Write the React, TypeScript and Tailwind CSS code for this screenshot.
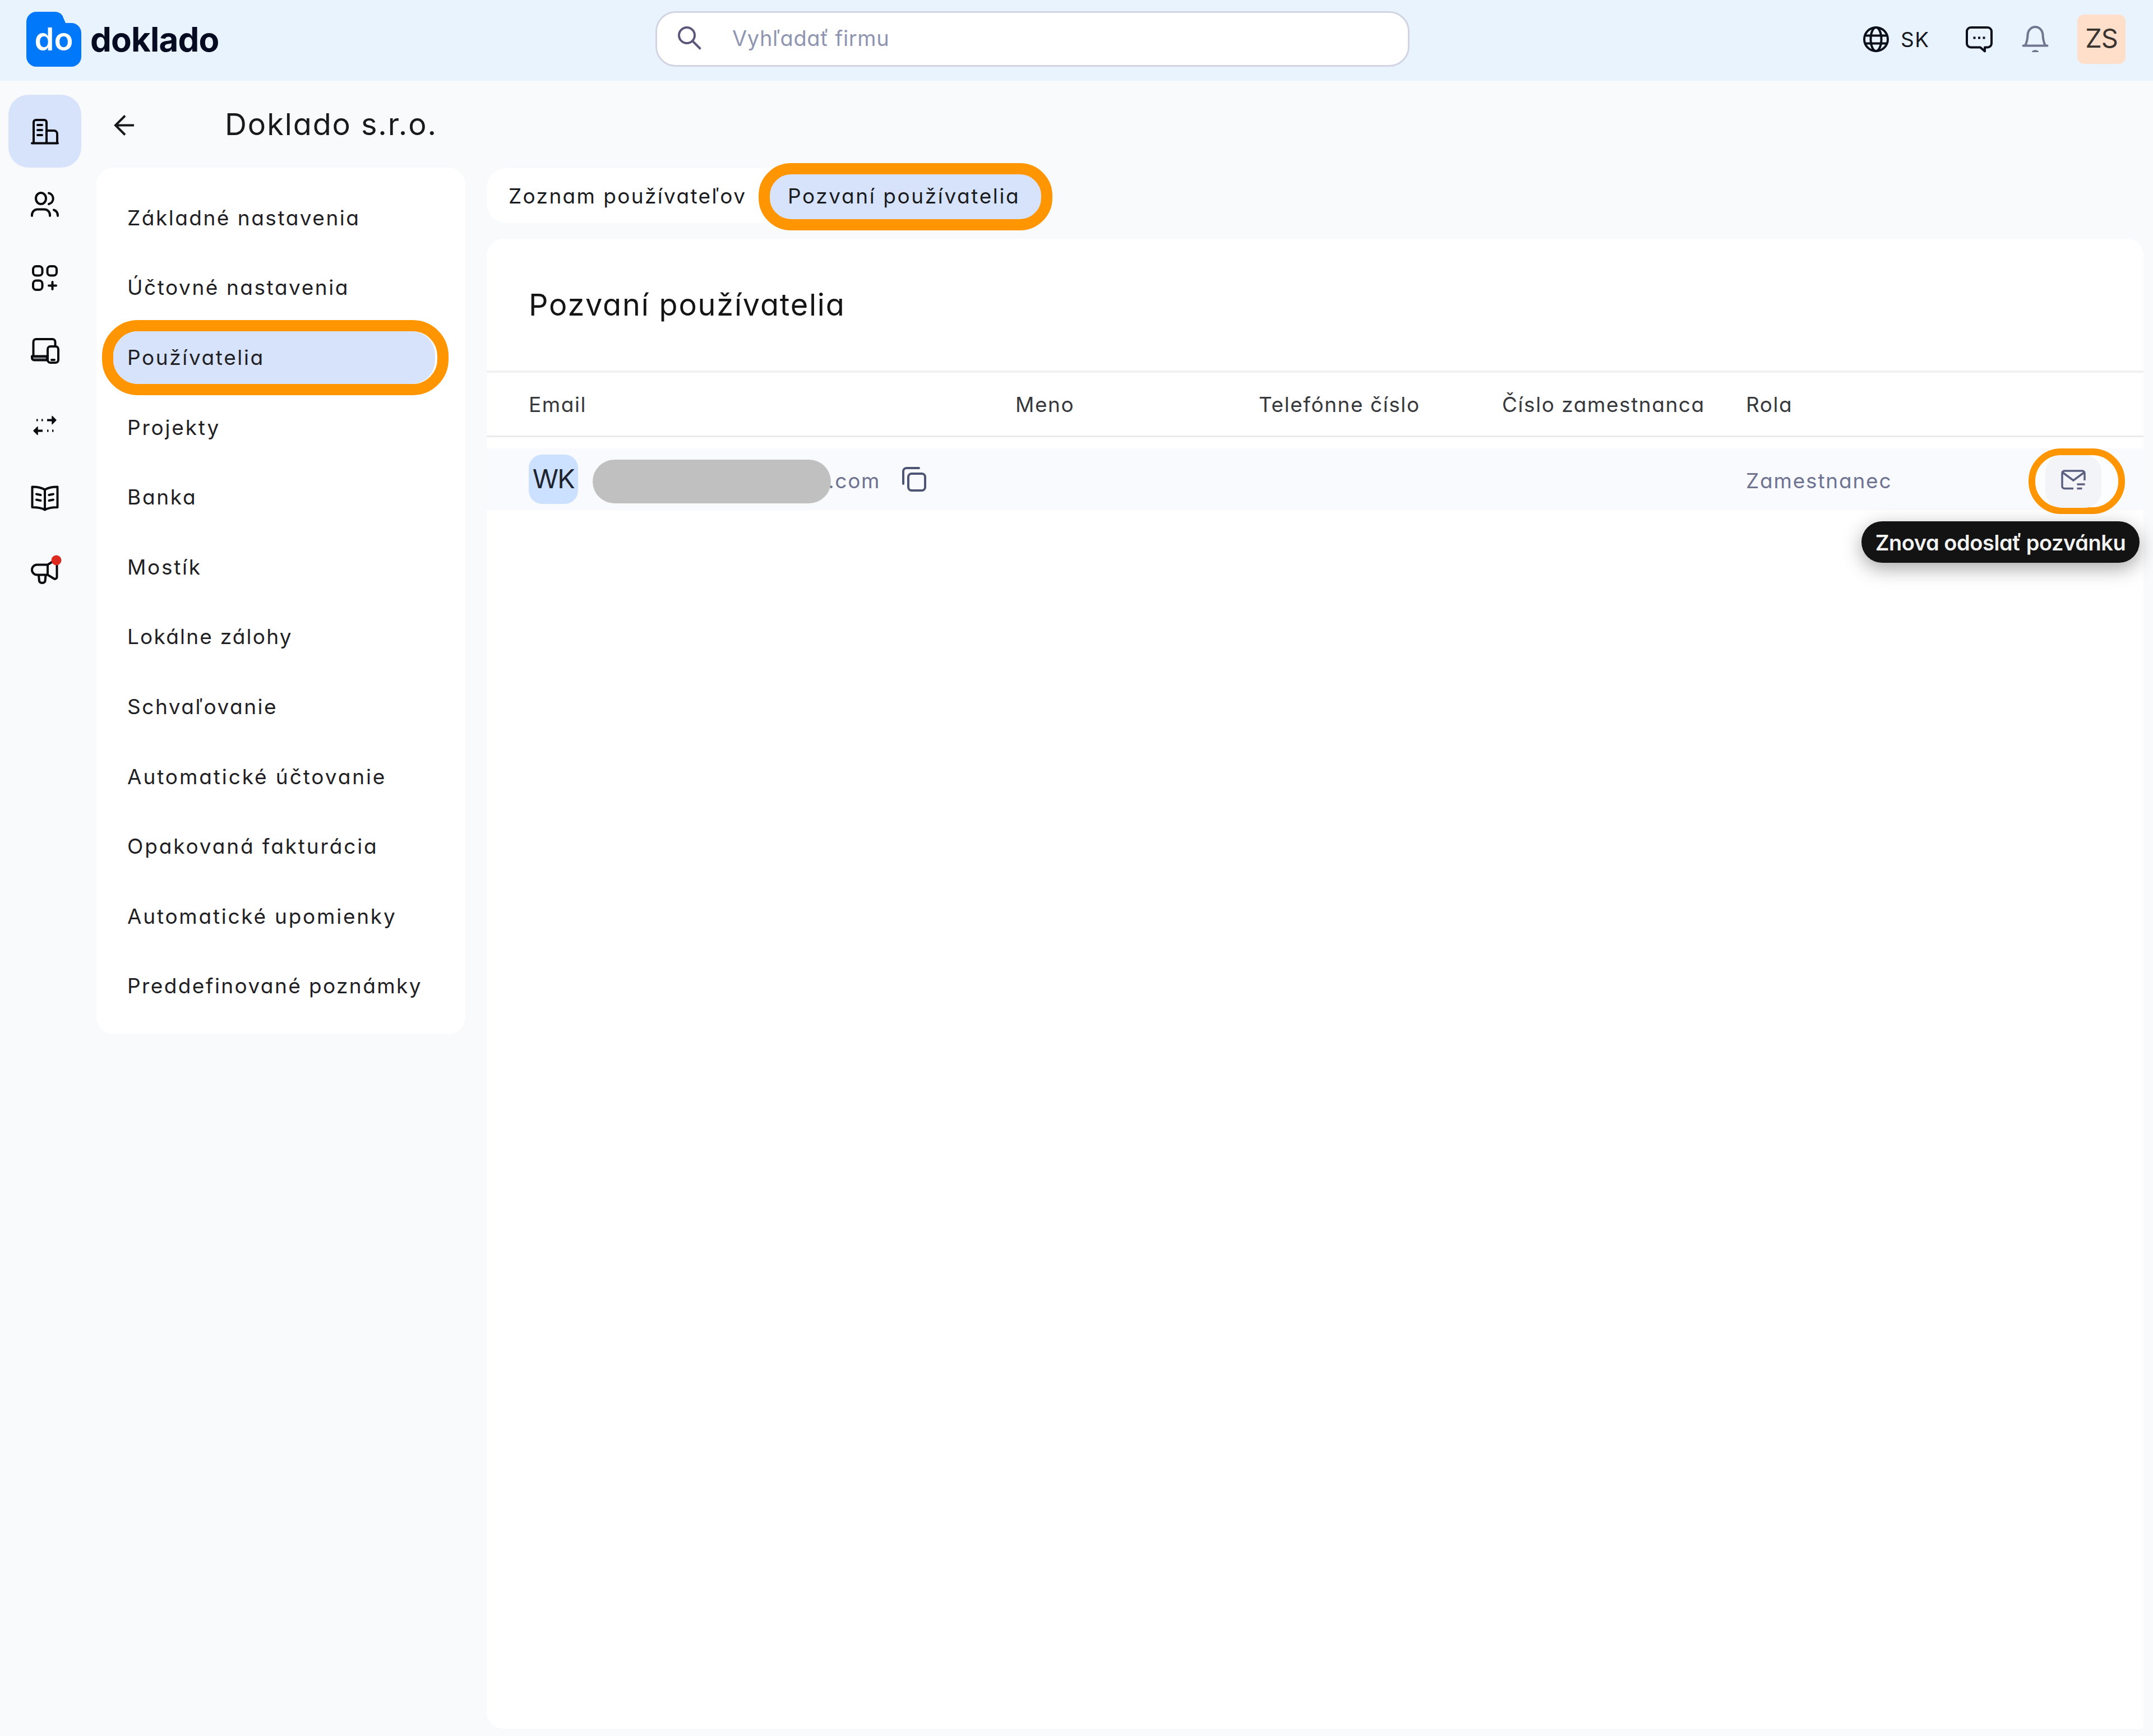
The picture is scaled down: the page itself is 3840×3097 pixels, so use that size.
import { ReactNode } from "react";

const menu = [
  { label: "Základné nastavenia", tracking: "tracking-[2.5px]" },
  { label: "Účtovné nastavenia", tracking: "tracking-[2.55px]" },
  { label: "Používatelia", tracking: "tracking-[2.6px]", active: true },
  { label: "Projekty", tracking: "tracking-[2.8px]" },
  { label: "Banka", tracking: "tracking-[2.7px]" },
  { label: "Mostík", tracking: "tracking-[2.7px]" },
  { label: "Lokálne zálohy", tracking: "tracking-[2.2px]" },
  { label: "Schvaľovanie", tracking: "tracking-[2.5px]" },
  { label: "Automatické účtovanie", tracking: "tracking-[2.9px]" },
  { label: "Opakovaná fakturácia", tracking: "tracking-[2.85px]" },
  { label: "Automatické upomienky", tracking: "tracking-[2.75px]" },
  { label: "Preddefinované poznámky", tracking: "tracking-[2.4px]" },
];

const columns = ["Email", "Meno", "Telefónne číslo", "Číslo zamestnanca", "Rola"];

function RailIcon({ children }: { children: ReactNode }) {
  return (
    <svg
      width="60"
      height="60"
      viewBox="0 0 60 60"
      fill="none"
      stroke="#0b0b0f"
      strokeWidth="4"
      strokeLinecap="round"
      strokeLinejoin="round"
      className="overflow-visible"
    >
      {children}
    </svg>
  );
}

const rail = [
  <RailIcon key="company">
    <path d="M10 51V14a4 4 0 0 1 4-4h15a4 4 0 0 1 4 4v37M33 29h13a6 6 0 0 1 6 6v16M7 51.500h46" />
    <path d="M17 19h8M17 28h8M17 37h8" />
  </RailIcon>,
  <RailIcon key="users">
    <ellipse cx="23" cy="19" rx="9" ry="10" />
    <path d="M37 9.500a10 10 0 0 1 0 19.500M7 50v-2a10 10 0 0 1 10-9.500h12a10 10 0 0 1 10 9.500v2M46 39.500c4.500 1.500 7 5 7 10.500" />
  </RailIcon>,
  <RailIcon key="modules">
    <rect x="9" y="9" width="16.500" height="16.500" rx="5.500" />
    <rect x="34.500" y="9" width="16.500" height="16.500" rx="5.500" />
    <rect x="9" y="34.500" width="16.500" height="16.500" rx="5.500" />
    <path d="M43.500 37v13M37 43.500h13" />
  </RailIcon>,
  <RailIcon key="devices">
    <path d="M9.500 38V13a5 5 0 0 1 5-5h29a5 5 0 0 1 5 5v6" />
    <path d="M34 38.500H7v3a4 4 0 0 0 4 4h23z" fill="#8b8c90" />
    <rect x="35" y="21" width="19" height="29" rx="5" />
    <path d="M42 45h5" />
  </RailIcon>,
  <RailIcon key="transfers">
    <path d="M34 21.500h12M14 40.500h12" strokeLinecap="butt" />
    <path d="M15 21.500h2.500M24 21.500h2.500M34 40.500h2.500M43 40.500h2.500" strokeLinecap="butt" />
    <path d="M43 14.500l7 7-7 7zM17 33.500l-7 7 7 7z" fill="#0b0b0f" strokeWidth="1.500" />
  </RailIcon>,
  <RailIcon key="ledger">
    <path d="M7.500 9.500c8 0 16 1 22.500 5 6.500-4 14.500-5 22.500-5v36.500c-8 0-16 .5-22.500 4.500-6.500-4-14.500-4.500-22.500-4.500zM30 14.500v36" />
    <path d="M15 22.500l7.500 1.500M15 32.500l7.500 1.500M45 22.500l-7.500 1.500M45 32.500l-7.500 1.500" />
  </RailIcon>,
  <RailIcon key="news">
    <path d="M35 17.500H16a9 9 0 0 0 0 18h19zM35 17.500L51.500 7v32a3.500 3.500 0 0 1-5 3.500L35 35.500" />
    <path d="M19 36l1 11a6 6 0 0 0 10.500 0l1-11" />
    <circle cx="50.500" cy="9.500" r="9" fill="#dc2a20" stroke="none" />
  </RailIcon>,
];

function Header() {
  return (
    <header className="flex h-[144px] items-center bg-[#e9f3fe] pr-[49px] pb-[5px] pl-[47px]">
      <div className="flex w-[1122px] items-center [font-feature-settings:normal]">
        <div className="relative flex h-[98px] w-[98px] items-center justify-center">
          <svg className="absolute inset-0" width="98" height="98" viewBox="0 0 98 98">
            <path
              fill="#0078fa"
              d="M18 0H50c9 0 14 4 16 11l4 9h10a18 18 0 0 1 18 18V80a18 18 0 0 1-18 18H18A18 18 0 0 1 0 80V18A18 18 0 0 1 18 0z"
            />
          </svg>
          <span className="relative text-[56px] leading-none font-semibold text-white">do</span>
        </div>
        <span className="ml-[16px] text-[60px] leading-none font-bold tracking-[-0.8px] text-[#060b22]">
          doklado
        </span>
      </div>

      <div className="flex h-[99px] w-[1345px] items-center rounded-[36px] border-[3px] border-[#d2d4e2] bg-white pb-[4px] pl-[36px]">
        <svg width="44" height="44" viewBox="0 0 44 44" fill="none" stroke="#5d587b" strokeWidth="4">
          <circle cx="17" cy="17" r="14" />
          <path d="M27 27l14.500 14.500" />
        </svg>
        <span className="ml-[54px] text-[38px] tracking-[0.6px] text-[#8f95b0]">Vyhľadať firmu</span>
      </div>

      <div className="ml-auto flex items-center">
        <svg width="48" height="48" viewBox="0 0 48 48" fill="none" stroke="#0b0f1a" strokeWidth="4">
          <circle cx="24" cy="24" r="21" />
          <ellipse cx="24" cy="24" rx="9.500" ry="21" />
          <path d="M4 17.500h40M4 31.500h40" />
        </svg>
        <span className="w-[134px] pt-[2px] pl-[20px] text-[37px] tracking-[1.5px] text-[#15181f]">SK</span>
        <svg
          width="52"
          height="50"
          viewBox="0 0 52 50"
          fill="none"
          stroke="#0b0f1a"
          strokeWidth="4"
          strokeLinejoin="round"
        >
          <path d="M11 4h30a7 7 0 0 1 7 7v21.500a7 7 0 0 1-7 7h-5v7l-8-7H11a7 7 0 0 1-7-7V11a7 7 0 0 1 7-7z" />
          <path d="M15.500 22.500h4M24 22.500h4M32.500 22.500h4" />
        </svg>
        <svg
          width="52"
          height="54"
          viewBox="0 0 52 54"
          fill="none"
          stroke="#70768f"
          strokeWidth="4"
          strokeLinecap="round"
          strokeLinejoin="round"
          className="ml-[48px]"
        >
          <path d="M4.500 38.500h43M8 38c3.500-6 4-11 4.500-18a13.500 15 0 0 1 27 0c.5 7 1 12 4.500 18" />
          <path d="M20 50c0-5 12-5 12 0z" fill="#70768f" stroke="none" />
        </svg>
        <div className="ml-[49px] flex h-[88px] w-[86px] items-center justify-center rounded-[12px] bg-[#ffdfca] pb-[5px] text-[47px] tracking-[-1px] text-[#3a3430]">
          ZS
        </div>
      </div>
    </header>
  );
}

function Menu() {
  return (
    <nav className="h-[1546px] w-[658px] rounded-[30px] bg-white pt-[27px]">
      {menu.map(({ label, tracking, active }) => (
        <div key={label} className="relative flex h-[124.6px] items-center pl-[55px]">
          {active && (
            <div className="absolute -top-[4px] left-[10px] h-[134px] w-[618px] rounded-[64px] border-[20px] border-[#ff9500] bg-white pr-[4px]">
              <div className="h-full w-full rounded-l-[44px] rounded-r-[42px] bg-[#d6e3fb]"></div>
            </div>
          )}
          <span className={`relative text-[37px] text-[#1f2023] ${tracking}`}>{label}</span>
        </div>
      ))}
    </nav>
  );
}

function Tabs() {
  return (
    <div className="relative flex h-[98px] w-[985px] items-center rounded-[36px] bg-white pl-[39px] text-[37px] text-[#1a1b1f]">
      <span className="w-[498px] tracking-[2.35px]">Zoznam používateľov</span>
      <div className="absolute -top-[9px] left-[485px] h-[120px] w-[524px] rounded-[58px] border-[20px] border-[#ff9500] bg-[#d6e3fb]"></div>
      <span className="relative tracking-[2.6px]">Pozvaní používatelia</span>
    </div>
  );
}

function ResendButton() {
  return (
    <div className="relative ml-auto h-[94px] w-[100px]">
      <div className="absolute -top-[12px] -left-[30px] h-[117px] w-[172px] rounded-[58px] border-[12px] border-[#ff9500] bg-[#fcfdfe]"></div>
      <div className="relative flex h-full w-full items-center justify-center rounded-[30px] bg-[#f3f4f8] pb-[6px]">
        <svg width="46" height="38" viewBox="0 0 46 38" fill="none" stroke="#5b5f80" strokeWidth="3.500">
          <path d="M23 34.500H7a4 4 0 0 1-4-4V7a4 4 0 0 1 4-4h32a4 4 0 0 1 4 4v13M4 6l19 14L42 6" />
          <path d="M29.500 27h14M29.500 34.500h9" />
        </svg>
      </div>
      <div className="absolute top-[118px] -right-[68px] flex h-[74px] w-[496px] items-center justify-center rounded-full bg-[#131313] pt-[2px] text-[38px] font-semibold tracking-[-0.45px] whitespace-nowrap text-[#f3f3f3] shadow-[0_10px_34px_rgba(0,0,0,0.35)]">
        Znova odoslať pozvánku
      </div>
    </div>
  );
}

function InvitedUsers() {
  return (
    <section className="mt-[28px] h-[2658px] w-[2955px] rounded-[30px] rounded-br-[6px] bg-white">
      <div className="flex h-[239px] items-center border-b-[4px] border-[#f1f1f3] pl-[75px]">
        <h2 className="text-[54px] tracking-[1.8px] text-[#141414]">Pozvaní používatelia</h2>
      </div>
      <div className="grid h-[115px] grid-cols-[868px_434px_434px_435px_1fr] items-center border-b-[3px] border-[#ebebee] pl-[75px] text-[37px] tracking-[1.55px] text-[#37383c]">
        {columns.map((column) => (
          <span key={column}>{column}</span>
        ))}
      </div>
      <div className="mt-[20px] grid h-[110px] grid-cols-[2171px_1fr] items-center bg-[#f9fafd] pr-[75px] pl-[75px] text-[37px] text-[#6e7391]">
        <div className="flex items-center">
          <div className="flex h-[88px] w-[88px] items-center justify-center rounded-[24px] bg-[#cce0ff] pb-[4px] text-[47px] tracking-[-1.7px] text-[#1d2430]">
            WK
          </div>
          <div className="relative z-10 mt-[8px] ml-[26px] h-[78px] w-[425px] rounded-[39px] bg-[#c0c0c0]"></div>
          <span className="-ml-[5px] pt-[4px] tracking-[1.7px]">.com</span>
          <svg
            width="48"
            height="48"
            viewBox="0 0 48 48"
            fill="none"
            stroke="#4e5473"
            strokeWidth="4"
            strokeLinecap="round"
            className="ml-[37px]"
          >
            <rect x="13" y="14" width="30" height="30" rx="6" />
            <path d="M4 32V10a6 6 0 0 1 6-6h22" />
          </svg>
        </div>
        <div className="flex items-center pt-[8px]">
          <span className="-mt-[4px] tracking-[1.8px]">Zamestnanec</span>
          <ResendButton />
        </div>
      </div>
    </section>
  );
}

export default function App() {
  return (
    <div className="h-[3097px] w-[3840px] overflow-hidden bg-[#f8fafc] font-[Inter,sans-serif] leading-none [font-feature-settings:'cv11']">
      <Header />
      <div className="flex">
        <aside className="flex w-[172px] flex-col gap-px pt-[25px] pl-[15px]">
          {rail.map((icon, index) => (
            <div
              key={index}
              className={`flex h-[130px] w-[130px] items-center justify-center rounded-[36px] ${index === 0 ? "bg-[#d6e3fb]" : ""}`}
            >
              {icon}
            </div>
          ))}
        </aside>
        <main className="flex-1">
          <div className="flex h-[155px] items-center gap-[161px] pl-[31px]">
            <svg width="37" height="37" viewBox="0 0 37 37" fill="none" stroke="#17181b" strokeWidth="4" className="mt-[3px]">
              <path d="M36 18.500H3M20 1.500L3 18.500l17 17" />
            </svg>
            <h1 className="text-[54px] tracking-[1.9px] text-[#1a1a1c]">Doklado s.r.o.</h1>
          </div>
          <div className="flex gap-[38px]">
            <Menu />
            <div className="pt-px">
              <Tabs />
              <InvitedUsers />
            </div>
          </div>
        </main>
      </div>
    </div>
  );
}
